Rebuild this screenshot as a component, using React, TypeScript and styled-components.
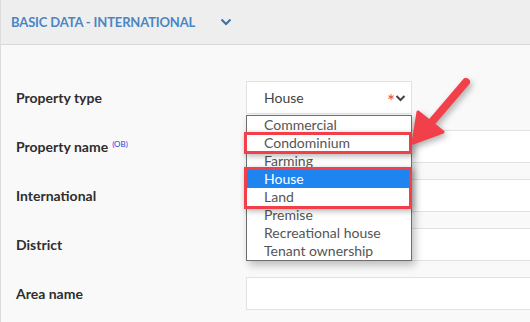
import React from 'react';
import styled, {createGlobalStyle} from "styled-components";

const GlobalStyle = createGlobalStyle`
    html, body {
        margin: 0;
        padding: 0;
        background: #f9f9f9;
        font-family: Lato, "Open Sans", sans-serif;
    }
`;

const Page = styled.div`
    position: relative;
    width: 530px;
    height: 322px;
    overflow: hidden;
    box-sizing: border-box;
    border-left: 1px solid #dcdcdc;
    background: #f9f9f9;
`;

const Header = styled.div`
    height: 44px;
    display: flex;
    align-items: center;
    padding-left: 10px;
    background: #eeeeee;
    border-bottom: 1px solid #d8d8d8;
`;

const HeaderTitle = styled.div`
    font-size: 13px;
    font-weight: bold;
    color: #4a86c4;
    letter-spacing: -0.15px;
`;

const HeaderChevron = styled.div`
    margin-left: 25px;
    display: flex;
    align-items: center;
    color: #3c6fa6;
`;

const Form = styled.div`
    padding-top: 36px;
    display: flex;
    flex-direction: column;
    gap: 16px;
`;

const Row = styled.div`
    display: grid;
    grid-template-columns: 245px 1fr;
    align-items: center;
    height: 33px;
`;

const Label = styled.div`
    padding-left: 15px;
    font-size: 14px;
    font-weight: bold;
    color: #2e2e2e;
`;

const Sup = styled.sup`
    font-size: 8px;
    font-weight: normal;
    color: #3040e0;
    margin-left: 4px;
    vertical-align: 5px;
`;

const Input = styled.div`
    height: 33px;
    box-sizing: border-box;
    background: #ffffff;
    border: 1px solid #e2e2e2;
    border-right: none;
`;

const Select = styled.div`
    width: 166px;
    height: 33px;
    box-sizing: border-box;
    display: flex;
    align-items: center;
    padding: 0 5px 0 17px;
    background: #ffffff;
    border: 1px solid #e2e2e2;
    font-size: 14px;
    color: #444444;
`;

const SelectValue = styled.span`
    flex: 1;
`;

const Asterisk = styled.span`
    color: #e84b4b;
    font-size: 19px;
    line-height: 1;
    margin-top: 5px;
    margin-right: 0;
`;

const Dropdown = styled.div`
    position: absolute;
    left: 245px;
    top: 115px;
    width: 166px;
    box-sizing: border-box;
    background: #ffffff;
    border: 1px solid #6e6e6e;
    box-shadow: 3px 4px 8px rgba(0,0,0,0.25);
`;

const Option = styled.div<{ $active?: boolean }>`
    height: 18px;
    line-height: 18px;
    padding-left: 17px;
    font-size: 14px;
    color: ${(props) => props.$active ? "#ffffff" : "#555555"};
    background: ${(props) => props.$active ? "#1e84f0" : "transparent"};
`;

const Marker = styled.div<{ $top: number, $height: number }>`
    position: absolute;
    left: 243px;
    width: 168px;
    top: ${(props) => props.$top}px;
    height: ${(props) => props.$height}px;
    box-sizing: border-box;
    border: 3px solid #f1404a;
    box-shadow: 2px 2px 6px rgba(0,0,0,0.3);
`;

const Arrow = styled.svg`
    position: absolute;
    left: 400px;
    top: 70px;
    filter: drop-shadow(2px 3px 3px rgba(0,0,0,0.3));
`;

const options = ["Commercial", "Condominium", "Farming", "House", "Land", "Premise", "Recreational house", "Tenant ownership"];

const App = () => {
    return (
        <Page>
            <GlobalStyle/>
            <Header>
                <HeaderTitle>BASIC DATA - INTERNATIONAL</HeaderTitle>
                <HeaderChevron>
                    <svg width="12" height="8" viewBox="0 0 12 8">
                        <path d="M1.5 1.5 L6 6 L10.5 1.5" fill="none" stroke="currentColor" strokeWidth="2"/>
                    </svg>
                </HeaderChevron>
            </Header>
            <Form>
                <Row>
                    <Label>Property type</Label>
                    <Select>
                        <SelectValue>House</SelectValue>
                        <Asterisk>*</Asterisk>
                        <svg width="11" height="8" viewBox="0 0 11 8">
                            <path d="M1.5 2 L5.5 6 L9.5 2" fill="none" stroke="#444" strokeWidth="2"/>
                        </svg>
                    </Select>
                </Row>
                <Row>
                    <Label>Property name<Sup>(OB)</Sup></Label>
                    <Input/>
                </Row>
                <Row>
                    <Label>International</Label>
                    <Input/>
                </Row>
                <Row>
                    <Label>District</Label>
                    <Input/>
                </Row>
                <Row>
                    <Label>Area name</Label>
                    <Input/>
                </Row>
            </Form>
            <Dropdown>
                {options.map(o => <Option key={o} $active={o === "House"}>{o}</Option>)}
            </Dropdown>
            <Marker $top={132} $height={22}/>
            <Marker $top={167} $height={42}/>
            <Arrow width="80" height="90" viewBox="0 0 80 90">
                <path d="M65 12 L24 60" stroke="#f1404a" strokeWidth="8" strokeLinecap="round"/>
                <path d="M12 73 L17 42 L42 62 Z" fill="#f1404a" stroke="#f1404a" strokeWidth="3" strokeLinejoin="round"/>
            </Arrow>
        </Page>
    );
};

export default App;
